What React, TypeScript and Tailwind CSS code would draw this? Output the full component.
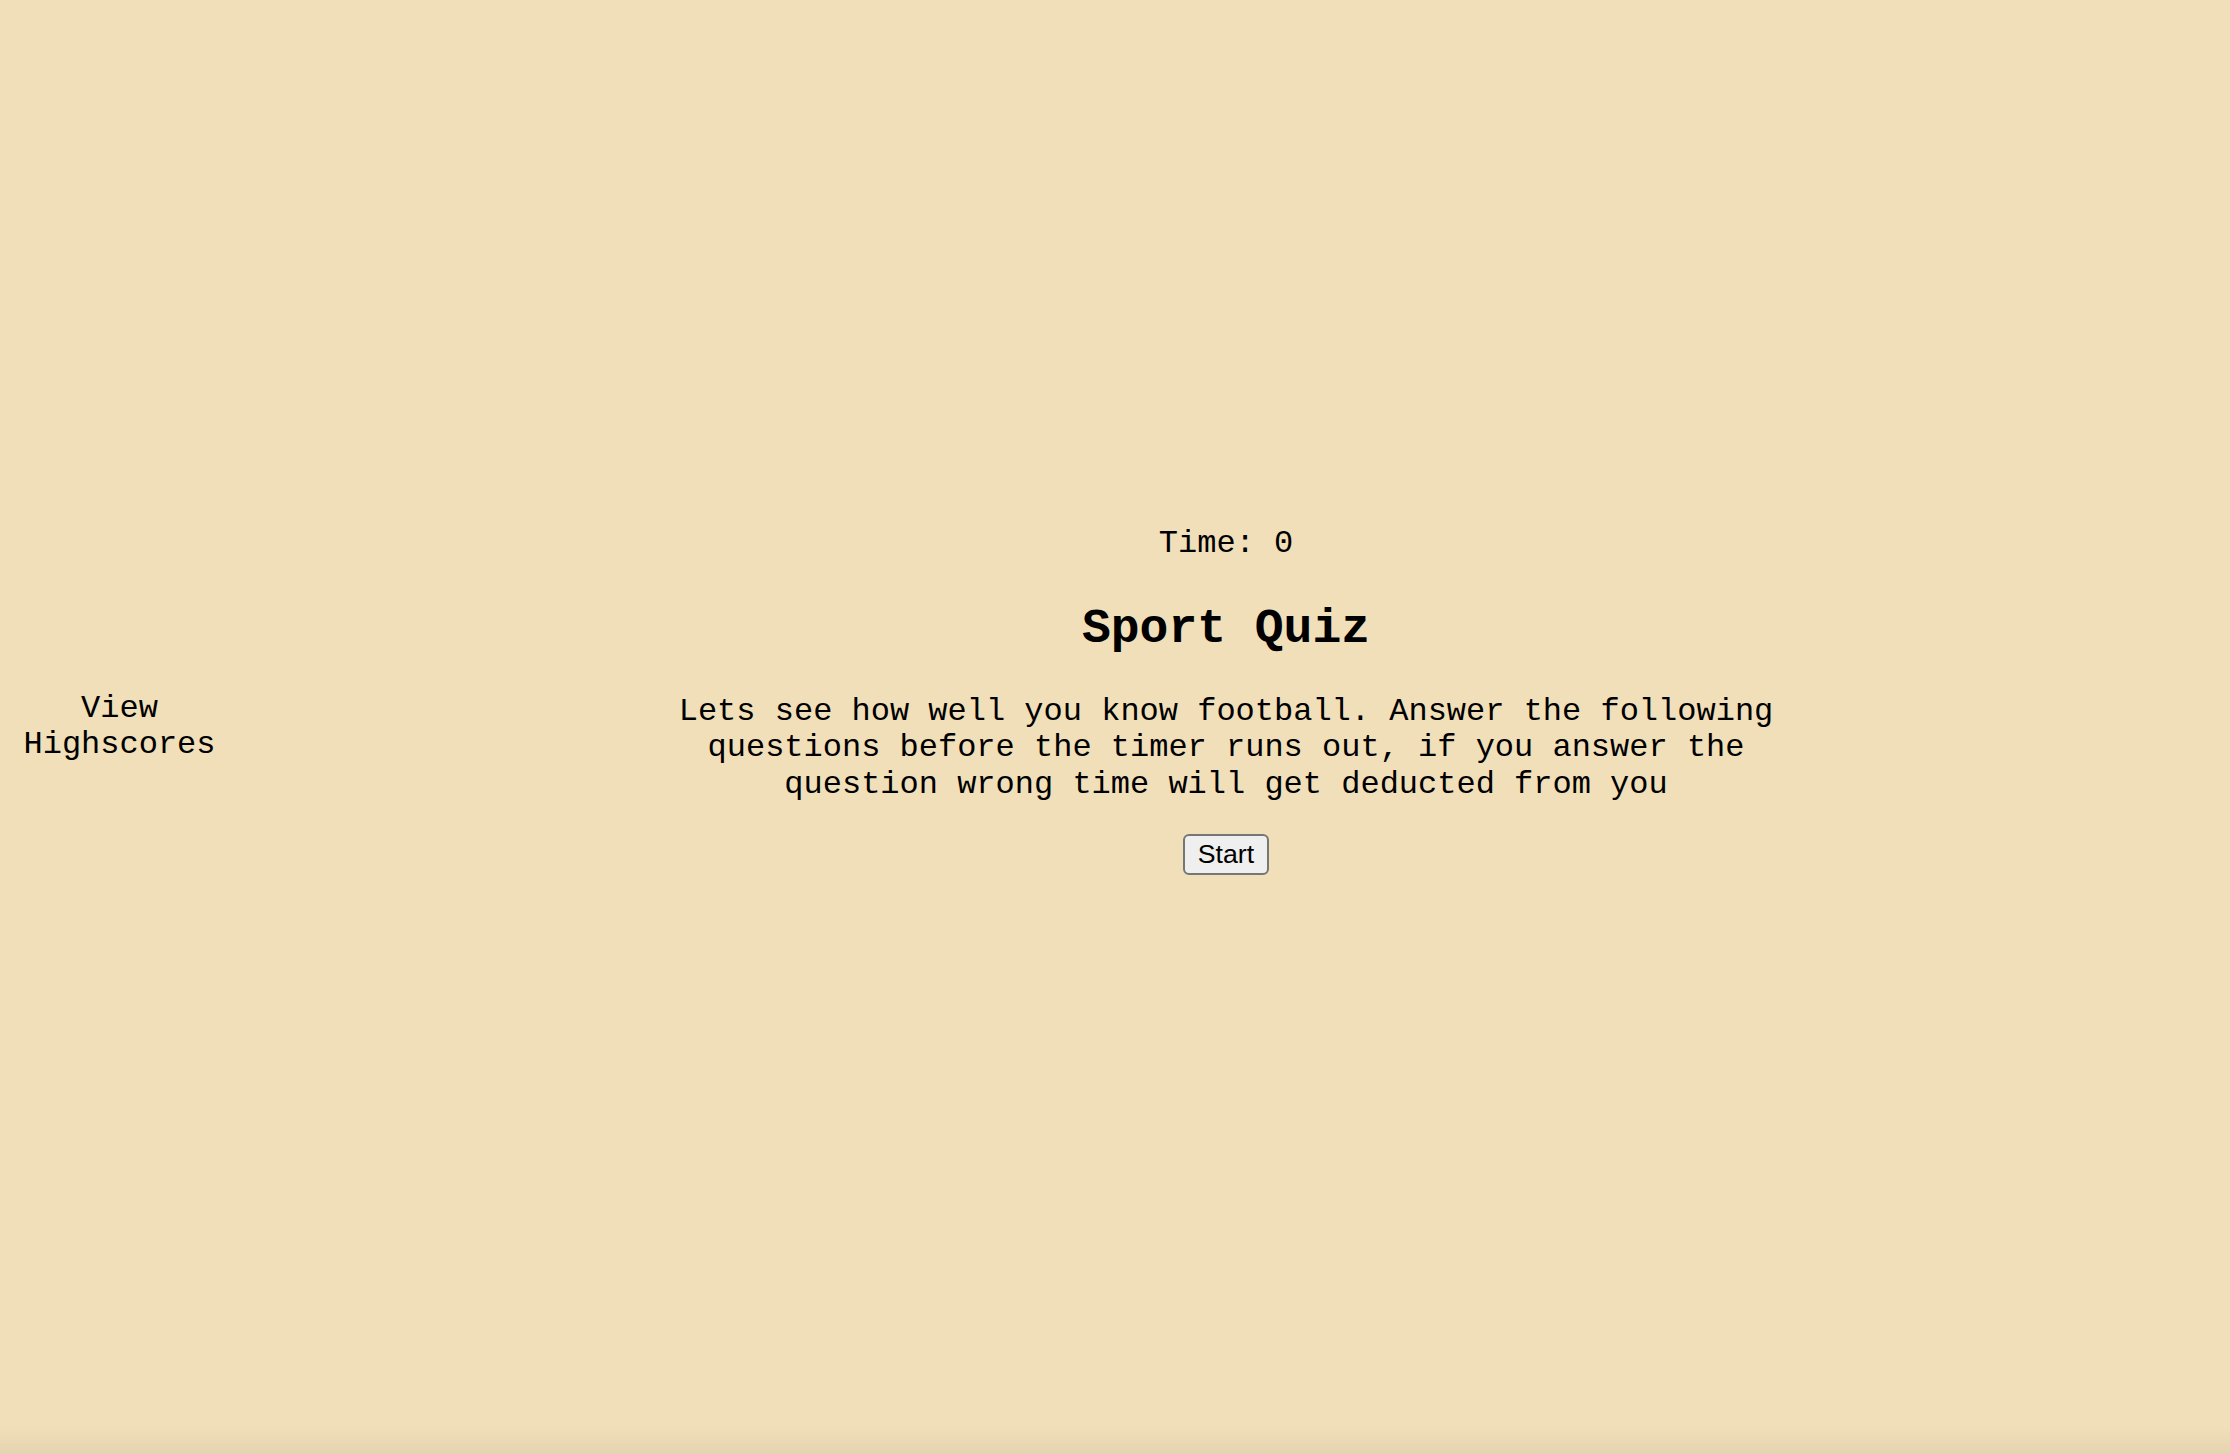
import React from "react";

const App = () => {
  return (
    <div className="relative flex h-screen w-full overflow-hidden bg-[#f1dfb9] text-black font-['Liberation_Mono','Courier_New',monospace]">

      <nav className="flex w-[239px] shrink-0 items-center justify-center">
        <a className="block text-center text-[32px] leading-[36px] cursor-pointer">
          View
          <br />
          Highscores
        </a>
      </nav>

      <main className="flex flex-1 flex-col items-center pt-[525px] pr-[17px] text-center">
        <p className="text-[32px] leading-[normal]">Time: 0</p>

        <h1 className="mt-[40px] text-[48px] font-bold leading-[normal]">Sport Quiz</h1>

        <p className="mt-[38px] max-w-[1110px] text-[32px] leading-[36.3px]">
          Lets see how well you know football. Answer the following questions before the timer runs out, if you answer the question wrong time will get deducted from you
        </p>

        <button className="mt-[31px] rounded-[6px] border-2 border-[#767676] bg-[#efefef] px-[13px] py-[3px] text-[26.67px] leading-[31px] font-['Liberation_Sans',Arial,sans-serif]">
          Start
        </button>
      </main>

      <div className="pointer-events-none absolute bottom-0 left-0 right-0 h-[28px] bg-gradient-to-b from-transparent to-black/5" />
    </div>
  );
};

export default App;
